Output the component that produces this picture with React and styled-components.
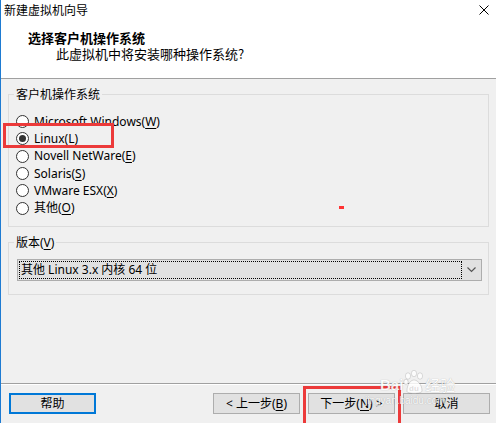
import React from 'react';
import styled, { createGlobalStyle } from 'styled-components';

// VMware "new VM" wizard, guest OS page

const GlobalStyle = createGlobalStyle`
  html, body {
    margin: 0;
    padding: 0;
    background: #f0f0f0;
  }
  body {
    font-family: "Noto Sans", "Noto Sans CJK SC", sans-serif;
    font-size: 12px;
    color: #000;
  }
`

const Window = styled.div`
  position: relative;
  width: 496px;
  height: 423px;
  box-sizing: border-box;
  border-left: 1px solid #1e7bd2;
  background: #f0f0f0;
  display: flex;
  flex-direction: column;
  overflow: hidden;
`

const Header = styled.div`
  height: 78px;
  background: #fff;
  border-bottom: 1px solid #a0a0a0;
  flex-shrink: 0;
`

const TitleBar = styled.div`
  height: 20px;
  padding: 0 7px 0 3px;
  display: flex;
  align-items: center;
  justify-content: space-between;
  line-height: 20px;
  font-family: "Noto Sans CJK SC", sans-serif;
`

const HeadTitle = styled.div`
  margin-top: 11px;
  padding-left: 27px;
  font-family: "Noto Sans CJK SC", sans-serif;
  font-size: 13px;
  font-weight: bold;
  line-height: 14px;
`

const HeadSub = styled.div`
  margin-top: 2px;
  padding-left: 55px;
  font-family: "Noto Sans CJK SC", sans-serif;
  font-size: 13px;
  line-height: 14px;
`

const GroupBox = styled.div`
  margin: 15px 7px 0 7px;
  height: ${p => p.$h}px;
  box-sizing: border-box;
  border: 1px solid #dcdcdc;
  flex-shrink: 0;
`

const GroupLabel = styled.div`
  width: fit-content;
  margin: -8px 0 0 5px;
  padding: 0 2px;
  line-height: 16px;
  background: #f0f0f0;
`

const RadioList = styled.div`
  padding: 10px 0 0 7px;
`

const RadioRow = styled.div`
  height: 17.3px;
  display: flex;
  align-items: center;
  gap: 5px;
  line-height: 16px;
`

const RadioDot = styled.span`
  width: 13px;
  height: 13px;
  box-sizing: border-box;
  border-radius: 50%;
  border: 1px solid #333;
  background: #fff;
  display: flex;
  align-items: center;
  justify-content: center;
  flex-shrink: 0;
  &::after {
    content: "";
    width: 7px;
    height: 7px;
    border-radius: 50%;
    background: ${p => (p.$checked ? '#333' : 'transparent')};
  }
`

const Select = styled.div`
  margin: 8px 0 0 8px;
  width: 465px;
  height: 22px;
  box-sizing: border-box;
  border: 1px solid #adadad;
  background: #e1e1e1;
  display: flex;
  align-items: center;
`

const SelectValue = styled.div`
  margin-left: 1px;
  width: 443px;
  height: 18px;
  box-sizing: border-box;
  border: 1px dotted #000;
  padding-left: 1px;
  line-height: 16px;
`

const SelectArrow = styled.div`
  flex: 1;
  display: flex;
  align-items: center;
  justify-content: center;
`

const Spacer = styled.div`
  flex: 1;
`

const Footer = styled.div`
  height: 40px;
  box-sizing: border-box;
  border-top: 1px solid #a0a0a0;
  box-shadow: inset 0 1px 0 #fff;
  padding: 9px 6px 0 8px;
  display: flex;
  align-items: flex-start;
  flex-shrink: 0;
`

const NavGroup = styled.div`
  margin-left: auto;
  display: flex;
  gap: 8px;
`

const Button = styled.div`
  width: 87px;
  height: 21px;
  box-sizing: border-box;
  border: ${p => (p.$focused ? '2px solid #0078d7' : '1px solid #adadad')};
  background: #e1e1e1;
  display: flex;
  align-items: center;
  justify-content: center;
  line-height: 16px;
  white-space: pre;
`

const Mn = styled.span`
  text-decoration: underline;
  text-underline-offset: 2px;
`

const Highlight = styled.div`
  position: absolute;
  box-sizing: border-box;
  border: 3px solid #ec3a3a;
  pointer-events: none;
`

const RedMark = styled.div`
  position: absolute;
  left: 338px;
  top: 206px;
  width: 5px;
  height: 3px;
  background: #ff3333;
`

const Watermark = styled.div`
  position: absolute;
  left: 364px;
  top: 370px;
  color: #fff;
  text-shadow: 0 0 1px rgba(0, 0, 0, 0.35);
  opacity: 0.85;
  pointer-events: none;
`

const WmLogo = styled.div`
  display: flex;
  align-items: flex-end;
  padding-left: 15px;
  font-family: "Liberation Sans", sans-serif;
  font-weight: bold;
  font-size: 15px;
  line-height: 18px;
`

const WmCn = styled.span`
  font-family: "Noto Sans CJK SC", sans-serif;
  font-weight: normal;
  font-size: 15px;
`

const WmUrl = styled.div`
  font-family: "Liberation Sans", sans-serif;
  font-size: 10px;
  line-height: 12px;
  margin-top: 1px;
`

const osList = [
  { pre: 'Microsoft Windows(', key: 'W', post: ')' },
  { pre: 'Linux(', key: 'L', post: ')', checked: true },
  { pre: 'Novell NetWare(', key: 'E', post: ')' },
  { pre: 'Solaris(', key: 'S', post: ')' },
  { pre: 'VMware ESX(', key: 'X', post: ')' },
  { pre: '其他(', key: 'O', post: ')' },
];

const CloseIcon = () => (
  <svg width="10" height="10" viewBox="0 0 10 10">
    <path d="M0.5 0.5 L9.5 9.5 M9.5 0.5 L0.5 9.5" stroke="#000" strokeWidth="1" />
  </svg>
);

const Chevron = () => (
  <svg width="9" height="6" viewBox="0 0 9 6">
    <path d="M0.5 0.5 L4.5 4.5 L8.5 0.5" stroke="#555" strokeWidth="1.2" fill="none" />
  </svg>
);

const Paw = () => (
  <svg width="22" height="24" viewBox="0 0 22 24">
    <g fill="#fff" stroke="rgba(0,0,0,0.25)" strokeWidth="0.6">
      <ellipse cx="5" cy="6" rx="2.6" ry="3.2" />
      <ellipse cx="11" cy="3.5" rx="2.6" ry="3.2" />
      <ellipse cx="17" cy="6" rx="2.6" ry="3.2" />
      <ellipse cx="3" cy="12" rx="2.2" ry="2.8" />
      <path d="M4 21 C4 14 8 10 11 10 C14 10 19 14 19 21 C19 24 3 24 4 21 Z" />
    </g>
    <text x="6" y="21" fontSize="8" fontWeight="bold" fill="rgba(0,0,0,0.12)" fontFamily="Liberation Sans, sans-serif">du</text>
  </svg>
);

const App = () => {
  return (
    <>
      <GlobalStyle />
      <Window>
        <Header>
          <TitleBar>
            <span>新建虚拟机向导</span>
            <CloseIcon />
          </TitleBar>
          <HeadTitle>选择客户机操作系统</HeadTitle>
          <HeadSub>此虚拟机中将安装哪种操作系统?</HeadSub>
        </Header>

        <GroupBox $h={133}>
          <GroupLabel>客户机操作系统</GroupLabel>
          <RadioList>
            {osList.map(os => (
              <RadioRow key={os.key}>
                <RadioDot $checked={os.checked} />
                <span>
                  {os.pre}<Mn>{os.key}</Mn>{os.post}
                </span>
              </RadioRow>
            ))}
          </RadioList>
        </GroupBox>

        <GroupBox $h={53}>
          <GroupLabel>版本(<Mn>V</Mn>)</GroupLabel>
          <Select>
            <SelectValue>其他 Linux 3.x 内核 64 位</SelectValue>
            <SelectArrow>
              <Chevron />
            </SelectArrow>
          </Select>
        </GroupBox>

        <Spacer />

        <Footer>
          <Button $focused>帮助</Button>
          <NavGroup>
            <Button>{'< 上一步('}<Mn>B</Mn>)</Button>
            <Button>下一步(<Mn>N</Mn>{') >'}</Button>
            <Button>取消</Button>
          </NavGroup>
        </Footer>

        <Highlight style={{ left: 2, top: 123, width: 111, height: 25 }} />
        <Highlight style={{ left: 302, top: 386, width: 98, height: 40 }} />
        <RedMark />

        <Watermark>
          <WmLogo>
            Bai<Paw /><WmCn>经验</WmCn>
          </WmLogo>
          <WmUrl>jingyan.baidu.com</WmUrl>
        </Watermark>
      </Window>
    </>
  );
};

export default App;
